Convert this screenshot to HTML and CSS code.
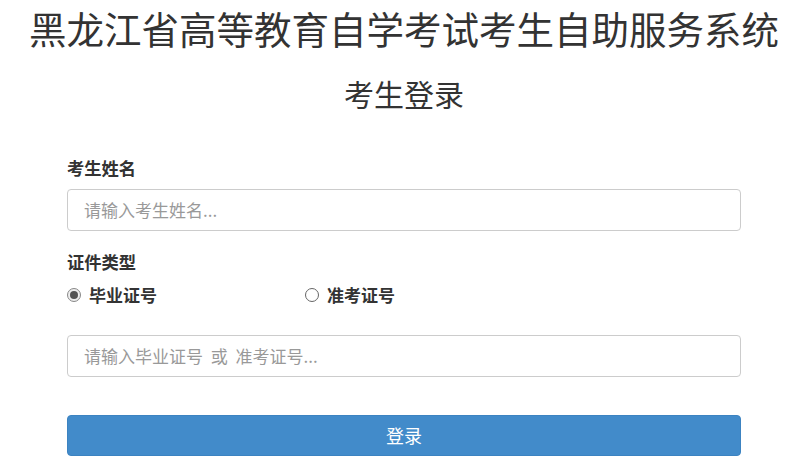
FILE: index.html
```html
<!DOCTYPE html>
<html lang="zh-CN">
<head>
<meta charset="utf-8">
<title>黑龙江省高等教育自学考试考生自助服务系统</title>
<link rel="stylesheet" href="styles.css">
</head>
<body>
<div class="page">
  <h1 class="title">黑龙江省高等教育自学考试考生自助服务系统</h1>
  <h2 class="subtitle">考生登录</h2>
  <form class="form">
    <label class="label">考生姓名</label>
    <div class="input">请输入考生姓名...</div>
    <label class="label label-second">证件类型</label>
    <div class="radios">
      <div class="radio-item radio-first"><span class="radio checked"></span><span class="radio-text">毕业证号</span></div>
      <div class="radio-item"><span class="radio"></span><span class="radio-text">准考证号</span></div>
    </div>
    <div class="input input-second">请输入毕业证号 或 准考证号...</div>
    <div class="button">登录</div>
  </form>
</div>
</body>
</html>
```
FILE: styles.css
```css
* { box-sizing: border-box; }
html, body { margin: 0; padding: 0; background: #fff; }
body {
  font-family: "Microsoft YaHei", "Noto Sans CJK SC", "Noto Sans", sans-serif;
  color: #333;
}
.page {
  width: 797px;
  height: 475px;
  overflow: hidden;
  padding: 0 56px 0 67px;
}
.title {
  margin: 0 -60px;
  font-size: 37.5px;
  font-weight: normal;
  line-height: 56px;
  text-align: center;
  white-space: nowrap;
  color: #333;
}
.subtitle {
  margin: 0;
  font-size: 30px;
  font-weight: normal;
  line-height: 40px;
  height: 73px;
  padding-top: 17px;
  text-align: center;
  color: #333;
}
.form {
  display: flex;
  flex-direction: column;
  margin-top: 28px;
}
.label {
  font-size: 17.3px;
  font-weight: bold;
  line-height: 22px;
  color: #333;
}
.label-second { margin-top: 20px; }
.input {
  margin-top: 10px;
  height: 42px;
  border: 1px solid #ccc;
  border-radius: 4px;
  padding: 0 16px;
  font-size: 17px;
  line-height: 40px;
  color: #999;
}
.input-second { margin-top: 28px; word-spacing: 4px; }
.radios {
  display: flex;
  margin-top: 10px;
  height: 24px;
  align-items: center;
}
.radio-item {
  display: flex;
  align-items: center;
}
.radio-first { width: 238px; }
.radio {
  width: 14px;
  height: 14px;
  border: 1px solid #666;
  border-radius: 50%;
  margin-right: 8px;
  display: flex;
  align-items: center;
  justify-content: center;
}
.radio.checked { border-color: #888; background: #eee; }
.radio.checked::after {
  content: "";
  width: 8px;
  height: 8px;
  border-radius: 50%;
  background: #555;
}
.radio-text {
  font-size: 17px;
  font-weight: bold;
  line-height: 24px;
  color: #333;
}
.button {
  margin-top: 38px;
  height: 41px;
  border-radius: 4px;
  background: #428bca;
  border: 1px solid #3c83c1;
  color: #fff;
  font-size: 18px;
  line-height: 39px;
  text-align: center;
}
```
